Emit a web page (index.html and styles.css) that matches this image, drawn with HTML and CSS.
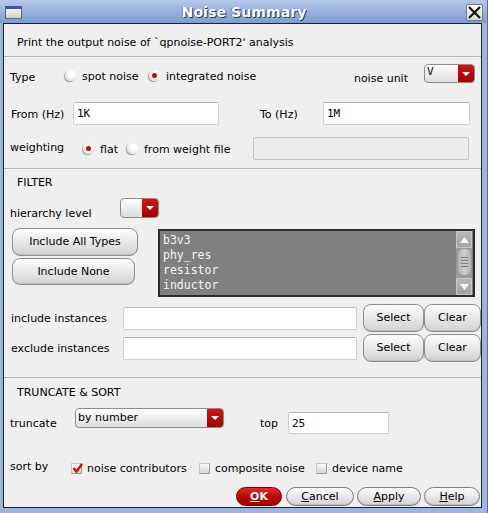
FILE: index.html
```html
<!DOCTYPE html>
<html>
<head>
<meta charset="utf-8">
<link rel="stylesheet" href="styles.css">
</head>
<body>
<div class="window">
  <div class="titlebar">
    <span class="win-icon"></span>
    <span class="title">Noise Summary</span>
    <span class="close"><svg width="13" height="13" viewBox="0 0 13 13"><path d="M1 1 L12 12 M12 1 L1 12" stroke="#111" stroke-width="2.2" fill="none"/></svg></span>
  </div>
  <div class="client">
    <div class="section s1">
      <div class="print">Print the output noise of `qpnoise-PORT2' analysis</div>
    </div>
    <div class="section s2">
      <div class="row type-row">
        <span class="lbl w-type">Type</span>
        <span class="radio"></span><span class="rtext t-spot">spot noise</span>
        <span class="radio on"></span><span class="rtext">integrated noise</span>
        <span class="lbl unit">noise unit</span>
        <span class="combo combo-v"><span class="ctext">V</span><span class="carrow"></span></span>
      </div>
      <div class="row from-row">
        <span class="lbl w-from">From (Hz)</span>
        <span class="input in-from">1K</span>
        <span class="lbl w-to">To (Hz)</span>
        <span class="input in-to">1M</span>
      </div>
      <div class="row weight-row">
        <span class="lbl w-weight">weighting</span>
        <span class="radio on"></span><span class="rtext t-flat">flat</span>
        <span class="radio"></span><span class="rtext">from weight file</span>
        <span class="input disabled in-file"></span>
      </div>
    </div>
    <div class="section s3">
      <div class="heading">FILTER</div>
      <div class="row hier-row">
        <span class="lbl w-hier">hierarchy level</span>
        <span class="combo combo-h"><span class="ctext"></span><span class="carrow"></span></span>
      </div>
      <div class="row types-row">
        <div class="type-btns">
          <span class="btn b-all">Include All Types</span>
          <span class="btn b-none">Include None</span>
        </div>
        <div class="listbox">
          <div class="items">
            <div>b3v3</div>
            <div>phy_res</div>
            <div>resistor</div>
            <div>inductor</div>
          </div>
          <div class="scroll">
            <span class="sb-btn"><svg width="9" height="6" viewBox="0 0 9 6"><path d="M4.5 0 L9 6 L0 6 Z" fill="#fff"/></svg></span>
            <span class="sb-track"><span class="thumb"><i></i><i></i><i></i><i></i></span></span>
            <span class="sb-btn"><svg width="9" height="6" viewBox="0 0 9 6"><path d="M0 0 L9 0 L4.5 6 Z" fill="#fff"/></svg></span>
          </div>
        </div>
      </div>
      <div class="row inst-row">
        <span class="lbl w-inst">include instances</span>
        <span class="input in-inst"></span>
        <span class="btn b-sel">Select</span>
        <span class="btn b-clr">Clear</span>
      </div>
      <div class="row inst-row ex">
        <span class="lbl w-inst">exclude instances</span>
        <span class="input in-inst"></span>
        <span class="btn b-sel">Select</span>
        <span class="btn b-clr">Clear</span>
      </div>
    </div>
    <div class="section s4">
      <div class="heading">TRUNCATE &amp; SORT</div>
      <div class="row trunc-row">
        <span class="lbl w-trunc">truncate</span>
        <span class="combo combo-t"><span class="ctext">by number</span><span class="carrow"></span></span>
        <span class="lbl w-top">top</span>
        <span class="input in-top">25</span>
      </div>
      <div class="row sort-row">
        <span class="lbl w-sort">sort by</span>
        <span class="check on"><svg width="11" height="11" viewBox="0 0 11 11"><path d="M1.5 5 L4.5 8.5 L10 1" stroke="#d01010" stroke-width="2.4" fill="none"/></svg></span><span class="ctxt c1">noise contributors</span>
        <span class="check"></span><span class="ctxt c2">composite noise</span>
        <span class="check"></span><span class="ctxt">device name</span>
      </div>
      <div class="row action-row">
        <span class="btn ok"><u>O</u>K</span>
        <span class="btn b-cancel"><u>C</u>ancel</span>
        <span class="btn b-apply"><u>A</u>pply</span>
        <span class="btn b-help"><u>H</u>elp</span>
      </div>
    </div>
  </div>
</div>
</body>
</html>
```

FILE: styles.css
```css
* { box-sizing: border-box; }
html, body { margin: 0; padding: 0; }
body {
  width: 488px; height: 513px; overflow: hidden;
  font-family: "DejaVu Sans", sans-serif;
  font-size: 11px; line-height: 14px; color: #000;
}
.window {
  width: 488px; height: 513px;
  background: #9db4dc;
  display: flex; flex-direction: column;
  border-right: 1px solid #5a6f98;
}
.titlebar {
  height: 23px;
  background: linear-gradient(#b3c8ea, #7f9dd2);
  display: flex; align-items: center;
  padding: 0 4px 0 5px;
}
.win-icon {
  width: 17px; height: 13px; margin-top: 1px;
  border: 1px solid #52648a; border-top: 3px solid #3d5a98;
  background: linear-gradient(#f4f4f4, #d0d0d0);
}
.title {
  flex: 1; text-align: center;
  font-weight: bold; font-size: 14px;
  color: #fff;
  text-shadow: 1px 1px 0 #2a3a60, -1px 0 0 #5a7ab0;
  letter-spacing: 0.1px;
}
.close {
  width: 17px; height: 17px; margin-top: 1px;
  border: 1px solid #7a7a7a; border-radius: 2px;
  background: linear-gradient(#fafafa, #d8d8d8);
  display: flex; align-items: center; justify-content: center;
}
.client {
  flex: 1;
  margin: 0 5px 5px 3px;
  border: 1px solid #1b2233;
  background: #efefef;
  display: flex; flex-direction: column;
}
.section { border-bottom: 1px solid #b4b4b4; padding: 0 0 0 6px; }
.section.s4 { border-bottom: none; flex: 1; }
.s1 { height: 33px; padding-top: 12px; padding-left: 13px; }
.row { display: flex; align-items: center; }
.lbl { white-space: nowrap; position: relative; top: 1px; }
.radio {
  width: 11px; height: 11px; border-radius: 50%;
  background: radial-gradient(circle at 65% 35%, #ffffff 30%, #d4d4d4 90%);
  box-shadow: -1px 1px 1px #9a9a9a;
  position: relative; flex: none;
}
.radio.on::after {
  content: ""; position: absolute; left: 3px; top: 3px;
  width: 5px; height: 5px; border-radius: 50%;
  background: #d00808;
}
.rtext { margin-left: 6px; white-space: nowrap; position: relative; top: 1px; }
.s2 { padding-top: 7px; padding-bottom: 8px; }
.type-row { height: 22px; }
.w-type { width: 55px; top: 3px; }
.type-row .rtext { top: 2px; }
.t-spot { width: 67px; }
.unit { margin-left: auto; margin-right: 16px; top: 4px; }
.combo {
  display: flex; align-items: stretch;
  border: 1px solid #8c8c8c; border-radius: 4px;
  background: linear-gradient(#ffffff, #dcdcdc);
  overflow: hidden;
}
.ctext { flex: 1; padding-left: 3px; line-height: 16px; white-space: nowrap; }
.carrow {
  width: 16px;
  background: linear-gradient(#d41414, #a00000);
  position: relative;
}
.carrow::after {
  content: ""; position: absolute; left: 4px; top: 7px;
  border-left: 4px solid transparent; border-right: 4px solid transparent;
  border-top: 4px solid #fff;
}
.combo-v { width: 51px; height: 19px; margin-right: 6px; align-self: flex-start; }
.combo-v .ctext { font-family: "DejaVu Sans Mono", monospace; font-size: 11px; padding-left: 2px; line-height: 13px; }
.input {
  height: 23px; background: #fff;
  border: 1px solid #cfcfcf; border-top-color: #b8b8b8; border-radius: 2px;
  font-family: "DejaVu Sans Mono", monospace; font-size: 11px;
  line-height: 21px; padding-left: 3px;
}
.from-row { height: 23px; margin-top: 16px; }
.w-from { width: 62px; margin-left: 1px; }
.in-from { width: 146px; }
.w-to { margin-left: 41px; width: 63px; }
.in-to { width: 147px; }
.weight-row { height: 23px; margin-top: 12px; }
.w-weight { width: 73px; top: -1px; }
.t-flat { width: 27px; }
.input.disabled { background: #ececec; border-color: #c4c4c4; }
.in-file { width: 216px; margin-left: auto; margin-right: 12px; }
.s3 { padding-top: 7px; padding-bottom: 15px; }
.heading { padding-left: 7px; }
.hier-row { height: 22px; margin-top: 8px; align-items: flex-start; }
.w-hier { width: 110px; margin-top: 8px; }
.combo-h { width: 39px; height: 20px; }
.types-row { margin-top: 8px; align-items: flex-start; }
.type-btns { display: flex; flex-direction: column; gap: 2px; margin-left: 2px; width: 146px; }
.btn {
  display: flex; align-items: center; justify-content: center;
  border: 1px solid #8e8e8e; border-radius: 8px;
  background: linear-gradient(#fdfdfd, #e8e8e8 50%, #d2d2d2);
  box-shadow: inset 0 -1px 0 #bdbdbd;
  white-space: nowrap;
}
.b-all { width: 126px; height: 28px; }
.b-none { width: 123px; height: 27px; }
.listbox {
  width: 317px; height: 68px; margin-top: 1px;
  border: 2px solid #2c2c2c;
  background: #7f7f7f;
  display: flex;
}
.items {
  flex: 1; padding: 2px 0 0 3px;
  font-family: "DejaVu Sans Mono", monospace; font-size: 11.5px;
  color: #f4f4f4; line-height: 15px;
}
.scroll { width: 16px; margin-right: 1px; display: flex; flex-direction: column; background: #9a9a9a; }
.sb-btn {
  height: 17px; background: linear-gradient(#b8b8b8, #a4a4a4);
  display: flex; align-items: center; justify-content: center;
  border: 1px solid #c8c8c8;
}
.sb-track { flex: 1; display: flex; justify-content: center; }
.thumb {
  width: 15px; height: 28px; border-radius: 7px;
  background: linear-gradient(90deg, #b4b4b4, #cdcdcd 50%, #b0b0b0);
  border: 1px solid #9a9a9a;
  display: flex; flex-direction: column; align-items: center; justify-content: center; gap: 2px;
}
.thumb i { display: block; width: 7px; height: 1px; background: #7a7a7a; }
.inst-row { margin-top: 7px; height: 28px; }
.inst-row.ex { margin-top: 2px; }
.w-inst { width: 112px; margin-left: 1px; }
.in-inst { width: 234px; height: 23px; }
.b-sel { width: 61px; height: 28px; margin-left: 6px; }
.b-clr { width: 57px; height: 28px; }
.s4 { padding-top: 8px; }
.trunc-row { margin-top: 8px; height: 26px; align-items: flex-start; }
.w-trunc { width: 65px; margin-top: 8px; }
.combo-t { width: 149px; height: 20px; }
.combo-t .ctext { padding-left: 2px; line-height: 17px; }
.w-top { margin-left: 36px; width: 28px; margin-top: 8px; }
.in-top { width: 101px; height: 22px; margin-top: 4px; }
.sort-row { margin-top: 26px; height: 14px; }
.w-sort { width: 61px; top: 0; }
.check {
  width: 11px; height: 11px; flex: none;
  border: 1px solid #9c9c9c; border-top-color: #c8c8c8; border-left-color: #c8c8c8;
  background: linear-gradient(#fafafa, #d6d6d6);
  position: relative; top: 1px;
}
.check svg { position: absolute; left: 0; top: -1px; }
.ctxt { margin-left: 5px; white-space: nowrap; position: relative; top: 2px; }
.c1 { width: 112px; }
.c2 { width: 101px; }
.action-row { margin-top: 13px; justify-content: flex-end; padding-right: 1px; }
.action-row .btn { height: 19px; border-radius: 10px; border-color: #7c7c7c; margin-left: 3px; }
.ok {
  width: 46px; margin-right: 1px;
  background: linear-gradient(#e82828, #c00606 50%, #a80000) !important;
  border-color: #7a0000 !important; color: #fff; font-weight: bold;
  box-shadow: none !important;
}
.b-cancel { width: 68px; }
.b-apply { width: 64px; }
.b-help { width: 56px; }
```
